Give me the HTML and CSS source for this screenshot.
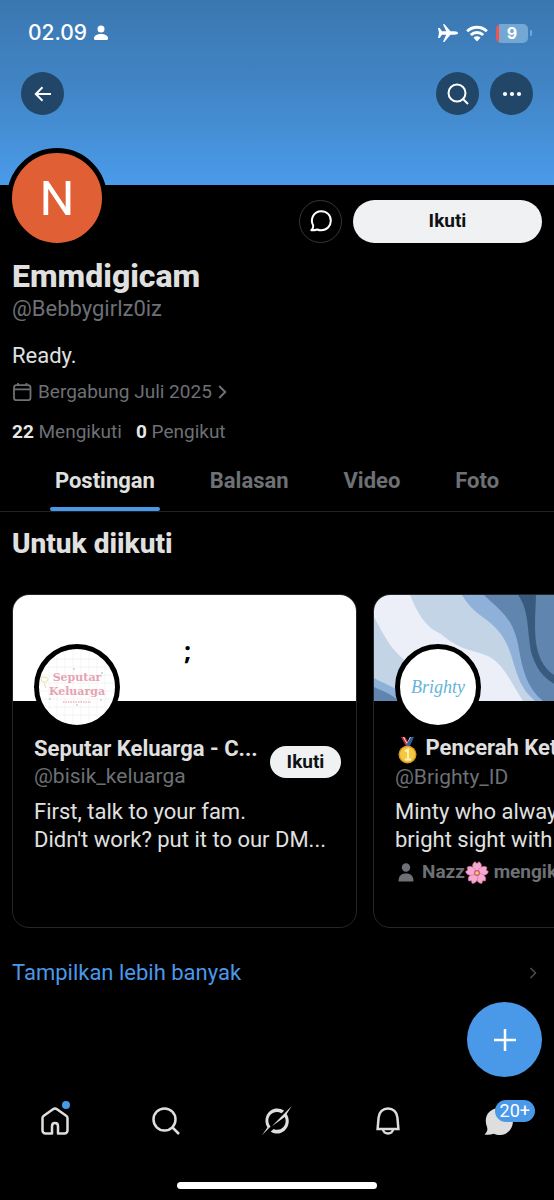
FILE: index.html
```html
<!DOCTYPE html>
<html lang="id">
<head>
<meta charset="utf-8">
<meta name="viewport" content="width=device-width, initial-scale=1">
<title>Emmdigicam</title>
<link rel="stylesheet" href="styles.css">
</head>
<body>
<div class="screen">
  <header class="cover">
    <div class="status">
      <span class="clock">02.09</span>
      <svg class="person" width="14" height="16" viewBox="0 0 14 16" fill="currentColor"><circle cx="7" cy="4" r="3.5"/><path d="M0 13.5C0 10.5 3 9 7 9s7 1.500 7 4.500c0 1.300-.8 1.500-1.500 1.500h-11C.8 15 0 14.800 0 13.500Z"/></svg>
      <div class="signals">
        <svg width="20" height="18" viewBox="0 0 20 18" fill="currentColor"><path d="M0 4h1.700L4 7.200l4.200.1L5.200.8c-.3-.7.8-1 1.300-.5l6 7h4C18.500 7.300 20 8 20 9s-1.500 1.700-3.500 1.700h-4l-6 7c-.5.500-1.600.2-1.300-.5l3-6.500-4.200.1L1.700 14H0l1-5Z"/></svg>
        <svg width="22" height="17" viewBox="0 0 22 17"><g fill="none" stroke="currentColor" stroke-width="3"><path d="M1.200 6.200a14 14 0 0 1 19.600 0"/><path d="M4.800 10a9 9 0 0 1 12.400 0"/></g><path fill="currentColor" d="M7.500 12.800a5 5 0 0 1 7 0L11 16.500Z"/></svg>
        <span class="battery"><span class="level">9</span></span>
      </div>
    </div>
    <div class="toolbar">
      <button class="round" aria-label="Kembali"><svg width="18" height="16" viewBox="0 0 18 16" fill="none" stroke="currentColor" stroke-width="2"><path d="M17 8H2M8.500 1.200 1.800 8l6.700 6.800"/></svg></button>
      <span class="spacer"></span>
      <button class="round" aria-label="Cari"><svg width="22" height="22" viewBox="0 0 22 22" fill="none" stroke="currentColor" stroke-width="2"><circle cx="10" cy="10" r="8.500"/><path d="m16 16 5 5"/></svg></button>
      <button class="round" aria-label="Lainnya"><svg width="20" height="6" viewBox="0 0 20 6" fill="currentColor"><circle cx="3" cy="3" r="2.100"/><circle cx="10" cy="3" r="2.100"/><circle cx="17" cy="3" r="2.100"/></svg></button>
    </div>
  </header>

  <main>
    <section class="profile">
      <div class="actions">
        <div class="avatar">N</div>
        <button class="message" aria-label="Pesan"><svg width="24" height="24" viewBox="0 0 24 24" fill="none" stroke="currentColor" stroke-width="2" stroke-linejoin="round"><path d="M4.200 16.500C1 11 4 2.200 12.300 2.200c5.500 0 9.500 4 9.500 9.500s-4 9.600-9.500 9.600c-1.700 0-2.900-.2-4-.8-2 .8-3.600.8-6 .8 1.700-1.600 2.300-3 1.900-4.800Z"/></svg></button>
        <button class="follow wide">Ikuti</button>
      </div>
      <h1>Emmdigicam</h1>
      <p class="handle">@Bebbygirlz0iz</p>
      <p class="about">Ready.</p>
      <a class="joined" href="#joined"><svg width="20" height="20" viewBox="0 0 20 20" fill="none" stroke="currentColor" stroke-width="1.800"><rect x="2" y="3.200" width="16.500" height="15" rx="2.500"/><path d="M2 7.300h16.500M6 1v2.500M14.500 1v2.500"/></svg><span>Bergabung Juli 2025</span><svg width="9" height="16" viewBox="0 0 9 16" fill="none" stroke="currentColor" stroke-width="2"><path d="m1.200 2 6 6-6 6"/></svg></a>
      <div class="counts"><a href="#following"><b>22</b> Mengikuti</a><a href="#followers"><b>0</b> Pengikut</a></div>
    </section>

    <nav class="tabs">
      <a class="active" href="#posts">Postingan</a>
      <a href="#replies">Balasan</a>
      <a href="#video">Video</a>
      <a href="#photos">Foto</a>
    </nav>

    <section class="suggest">
      <h2>Untuk diikuti</h2>
      <div class="cards">
        <article class="card">
          <div class="banner plain">;</div>
          <div class="body">
            <div class="thumb family"><svg width="76" height="76" viewBox="0 0 76 76"><g fill="none" stroke="#f4f4f6"><path d="M10 0v76M18 0v76M26 0v76M34 0v76M42 0v76M50 0v76M58 0v76M66 0v76M0 10h76M0 18h76M0 26h76M0 34h76M0 42h76M0 50h76M0 58h76M0 66h76"/></g><path d="M2 29q2-3 4 0 3-2 3 2-2 3-4 2-3 0-3-4Zm3 5 2 5" fill="none" stroke="#e7df9f"/><g fill="#bcd8c5"><circle cx="35" cy="20" r="1"/><circle cx="63" cy="24" r="1"/><circle cx="11" cy="50" r="1"/><circle cx="62" cy="51" r="1"/><circle cx="38" cy="56" r="1"/></g><text class="mark" x="38" y="32" text-anchor="middle">Seputar</text><text class="mark" x="38" y="46" text-anchor="middle">Keluarga</text><path d="M24 53h28" stroke="#edb5bf" stroke-width="1.500" stroke-dasharray="1.500 1"/></svg></div>
            <div class="heading">
              <div class="who"><h3>Seputar Keluarga - C...</h3><p class="handle">@bisik_keluarga</p></div>
              <button class="follow small">Ikuti</button>
            </div>
            <p class="bio">First, talk to your fam.<br>Didn't work? put it to our DM...</p>
          </div>
        </article>
        <article class="card">
          <div class="banner"><svg width="345" height="106" viewBox="0 0 345 106"><path fill="#eceff8" d="M0 0h345v106H0z"/><path fill="#c3d4e7" d="M0 22c9 16 14 28 27 40 16 15 30 28 36 44H0Z"/><path fill="#8fb0d8" d="M0 83c12 7 24 9 37 23H0Z"/><path fill="#6085ae" d="M0 92c8 4 16 6 25 14H0Z"/><path fill="#c3d4e7" d="M36 0c8 19 15 32 31 39 18 16 32 16 47 22 16 8 23 27 35 45h196V0Z"/><path fill="#8fb0d8" d="M88 0c7 12 15 18 26 26 26 20 22 43 35 66 3 6 8 10 12 14h184V0Z"/><path fill="#6085ae" d="M110 0c15 15 28 21 34 49 4 23 8 43 25 57h176V0Z"/><path fill="#375a7d" d="M144 0c12 15 9 42 14 60 6 17 12 24 31 34h156V0Z"/><path fill="#6085ae" d="M162 0c-1 27-3 48 5 65 5 10 12 16 25 21h153V0Z"/></svg></div>
          <div class="body">
            <div class="thumb brighty"><span>Brighty</span></div>
            <div class="heading">
              <div class="who"><h3><svg class="emoji" width="25" height="28" viewBox="0 0 25 28"><path fill="#c92b39" d="M6 1h4l5 8-3 3Z"/><path fill="#fff" d="m9 1 3 6 3-6h1l-3 9-5-9Z"/><path fill="#315d9c" d="M16 1h3l-5 11-3-3Z"/><circle cx="12.500" cy="18.500" r="9" fill="#d99b20"/><circle cx="12.500" cy="18.500" r="7.500" fill="#f3c944"/><path d="m10 15.500 3-2v10m-3 0h6" stroke="#fff2b1" stroke-width="2" fill="none"/></svg> Pencerah Ket...</h3><p class="handle">@Brighty_ID</p></div>
              <button class="follow small">Ikuti</button>
            </div>
            <p class="bio">Minty who always give you<br>bright sight with love</p>
            <p class="social"><svg width="16" height="19" viewBox="0 0 16 19" fill="currentColor"><circle cx="8" cy="4.500" r="4.200"/><path d="M.5 18.500C.5 13 3 10.500 8 10.500s7.500 2.500 7.500 8Z"/></svg><span>Nazz<svg class="emoji" width="24" height="24" viewBox="0 0 24 24"><g fill="#f5a9cf" stroke="#d873a6" stroke-width=".6"><path id="petal" d="M12 12C6 8 7 2 10 .8l2 1.700 2-1.700C17 2 18 8 12 12Z"/><use href="#petal" transform="rotate(72 12 12)"/><use href="#petal" transform="rotate(144 12 12)"/><use href="#petal" transform="rotate(216 12 12)"/><use href="#petal" transform="rotate(288 12 12)"/></g><circle cx="12" cy="12" r="3" fill="#c95488"/><circle cx="12" cy="12" r="1.800" fill="#f9d24c"/></svg> mengikuti</span></p>
          </div>
        </article>
      </div>
      <a class="more" href="#more"><span>Tampilkan lebih banyak</span><svg width="8" height="14" viewBox="0 0 8 14" fill="none" stroke="#4b4d50" stroke-width="1.500"><path d="m1.500 2 5 5-5 5"/></svg></a>
    </section>
  </main>

  <button class="compose" aria-label="Buat postingan"><svg width="24" height="24" viewBox="0 0 24 24" stroke="currentColor" stroke-width="2.500"><path d="M12 1v22M1 12h22"/></svg></button>

  <footer>
    <nav class="dock">
      <a href="#home" aria-label="Beranda"><span class="icon"><svg width="30" height="30" viewBox="0 0 30 30" fill="none" stroke="currentColor" stroke-width="2.500" stroke-linejoin="round"><path d="M12 27.500H5.500a3 3 0 0 1-3-3V12.300c0-1 .4-1.900 1.300-2.500L13 3.200c1.300-.9 2.700-.9 4 0l9.200 6.600c.9.600 1.300 1.500 1.300 2.500v12.200a3 3 0 0 1-3 3H18v-7.300c0-4.300-6-4.300-6 0Z"/></svg><i class="dot"></i></span></a>
      <a href="#search" aria-label="Cari"><svg width="30" height="30" viewBox="0 0 30 30" fill="none" stroke="currentColor" stroke-width="2.500"><circle cx="13.500" cy="13.500" r="11"/><path d="m21.500 21.500 6.500 6.500"/></svg></a>
      <a href="#grok" aria-label="Grok"><svg width="32" height="32" viewBox="0 0 34 34" fill="currentColor"><path d="M24.500 6 21.800 8.800C15 5 7.800 9.500 7.800 16.500c0 2.600.8 4.600 2.400 6.400L1 32.200l5.800-8.400C1.500 14.500 7.500 3.600 17 3.600c2.900 0 5.400.8 7.500 2.400Z"/><path d="M32.500 1.200 27.300 9.500C33.200 19 26.500 30.400 17 30.400c-2.700 0-4.900-.8-6.700-2.200l3.200-2.800c6 3 12.700-1.500 12.700-8.400 0-1.500-.3-2.800-.9-4.200L11.500 22.700Z"/></svg></a>
      <a href="#notifications" aria-label="Notifikasi"><svg width="28" height="30" viewBox="0 0 28 30" fill="none" stroke="currentColor" stroke-width="2.500"><path d="M4.600 11.500C5 6 9 2.500 14 2.500s9 3.500 9.400 9l1 11.500H3.600ZM9 23c0 6 10 6 10 0"/></svg></a>
      <a href="#messages" aria-label="Pesan, 20+ baru"><span class="icon"><svg width="30" height="30" viewBox="0 0 30 30" fill="currentColor"><path d="M3 21C-1 11 5 2 15.500 2 23 2 29 8 29 15.200S23.500 29 16 29c-2.500 0-4.500-.4-6.200-1.200-3 1-5.800 1-9.300.7 2.300-2.300 3.500-4.300 2.500-7.500Z"/></svg><span class="badge">20+</span></span></a>
    </nav>
    <div class="home-bar"></div>
  </footer>
</div>
</body>
</html>
```

FILE: styles.css
```css
* { box-sizing: border-box; }
body { margin: 0; background: #000; color: #e0e0e0; font: 22px/28px Roboto, "Noto Sans", sans-serif; overflow-x: hidden; }
h1, h2, h3, p { margin: 0; }
a { color: inherit; text-decoration: none; }
svg { display: block; flex: none; }
button { display: flex; align-items: center; justify-content: center; flex: none; border: 0; padding: 0; font: inherit; color: #fff; border-radius: 999px; }

.screen { min-height: 100vh; display: flex; flex-direction: column; }

.cover { height: 185px; padding: 20px 21px 0; color: #fff; background: linear-gradient(#3a77b0, #4286c7 50%, #4a9bea); }
.status { display: flex; align-items: center; height: 26px; padding-left: 7px; }
.clock { font: 500 21px/26px Inter, sans-serif; }
.person { margin-left: 7px; }
.signals { display: flex; align-items: center; gap: 8px; margin-left: auto; padding-right: 5px; }
.battery { position: relative; width: 32px; height: 19px; border-radius: 5px; background: linear-gradient(90deg, #ef554e 3px, #73a7d4 3px); }
.battery::after { content: ""; position: absolute; right: -4px; top: 6px; width: 2px; height: 6px; border-radius: 2px; background: #73a7d4; }
.level { display: block; text-align: center; font: 700 16px/19px Inter, sans-serif; }
.toolbar { display: flex; gap: 11px; margin-top: 26px; }
.spacer { flex: 1; }
.round { width: 43px; height: 43px; background: #214668; }

.profile { padding: 0 12px; }
.actions { display: flex; align-items: center; gap: 11px; height: 72px; }
.avatar { width: 100px; height: 100px; margin: -46px auto 0 -5px; border: 5px solid #000; border-radius: 50%; background: #e05f35; color: #fff; text-align: center; font: 400 49px/92px Roboto, sans-serif; }
.message { width: 43px; height: 43px; border: 1px solid #34373a; background: #000; }
.follow { background: #eff1f3; color: #0f1113; font-weight: 700; font-size: 19px; }
.wide { width: 189px; height: 43px; }
h1 { font-size: 32px; line-height: 38px; font-weight: 800; }
.handle, .joined, .counts, .social { color: #6d7074; }
.about { margin-top: 19px; }
.joined { display: flex; align-items: center; gap: 6px; margin-top: 8px; font-size: 19px; }
.counts { display: flex; gap: 14px; margin-top: 12px; font-size: 19px; }
.counts b { color: #e7e7e7; }

.tabs { display: flex; justify-content: space-evenly; margin-top: 2px; border-bottom: 1px solid #202224; font-weight: 700; color: #6d7074; }
.tabs a { position: relative; padding: 16px 0 13px; line-height: 34px; }
.tabs .active { color: #e0e0e0; }
.active::after { content: ""; position: absolute; left: -5px; right: -5px; bottom: 0; height: 4px; border-radius: 2px; background: #4a99e9; }

.suggest { padding: 14px 12px 0; }
h2 { font-size: 28px; line-height: 36px; font-weight: 800; }
.cards { display: flex; gap: 16px; margin: 32px -12px 0 0; overflow: hidden; }
.card { flex: none; width: 345px; height: 334px; border: 1px solid #242629; border-radius: 17px; overflow: hidden; }
.banner { height: 106px; overflow: hidden; }
.plain { padding-left: 6px; background: #fff; color: #000; text-align: center; font: 700 25px/110px "Noto Sans", sans-serif; }
.body { padding: 0 15px 0 21px; }
.thumb { display: flex; align-items: center; justify-content: center; width: 86px; height: 86px; margin-top: -57px; border: 5px solid #000; border-radius: 50%; background: #fff; overflow: hidden; position: relative; }
.mark { font: 700 11px "DejaVu Serif", serif; fill: #e7a2b0; }
.brighty { color: #65b4d8; font: italic 18px "Liberation Serif", serif; }
.heading { display: flex; align-items: center; gap: 8px; margin-top: 4px; height: 56px; }
.heading .handle { font-size: 21px; line-height: 26px; }
.who { flex: 1; min-width: 0; }
h3 { font-size: 22px; line-height: 28px; font-weight: 700; white-space: nowrap; }
.small { width: 71px; height: 32px; }
.bio { margin-top: 8px; white-space: nowrap; }
.emoji { display: inline-block; vertical-align: middle; }
.social { display: flex; align-items: center; gap: 8px; margin-top: 4px; padding-left: 3px; font-size: 19px; font-weight: 700; white-space: nowrap; }
.more { display: flex; align-items: center; justify-content: space-between; margin-top: 31px; padding-right: 5px; color: #4a99e9; }

.compose { position: fixed; right: 12px; bottom: 123px; width: 75px; height: 75px; background: #4a99e9; }
footer { margin-top: auto; padding-bottom: 11px; }
.dock { display: grid; grid-template-columns: repeat(5, 1fr); place-items: center; height: 40px; margin-bottom: 41px; color: #dedede; }
.icon { position: relative; display: block; }
.dot { position: absolute; right: 0; top: -5px; width: 8px; height: 8px; border-radius: 50%; background: #4a99e9; }
.badge { position: absolute; left: 11px; top: -6px; padding: 0 5px; border-radius: 11px; background: #4a99e9; color: #fff; font-size: 18px; line-height: 22px; }
.home-bar { width: 36%; height: 7px; margin: 0 auto; border-radius: 4px; background: #fff; }
```
